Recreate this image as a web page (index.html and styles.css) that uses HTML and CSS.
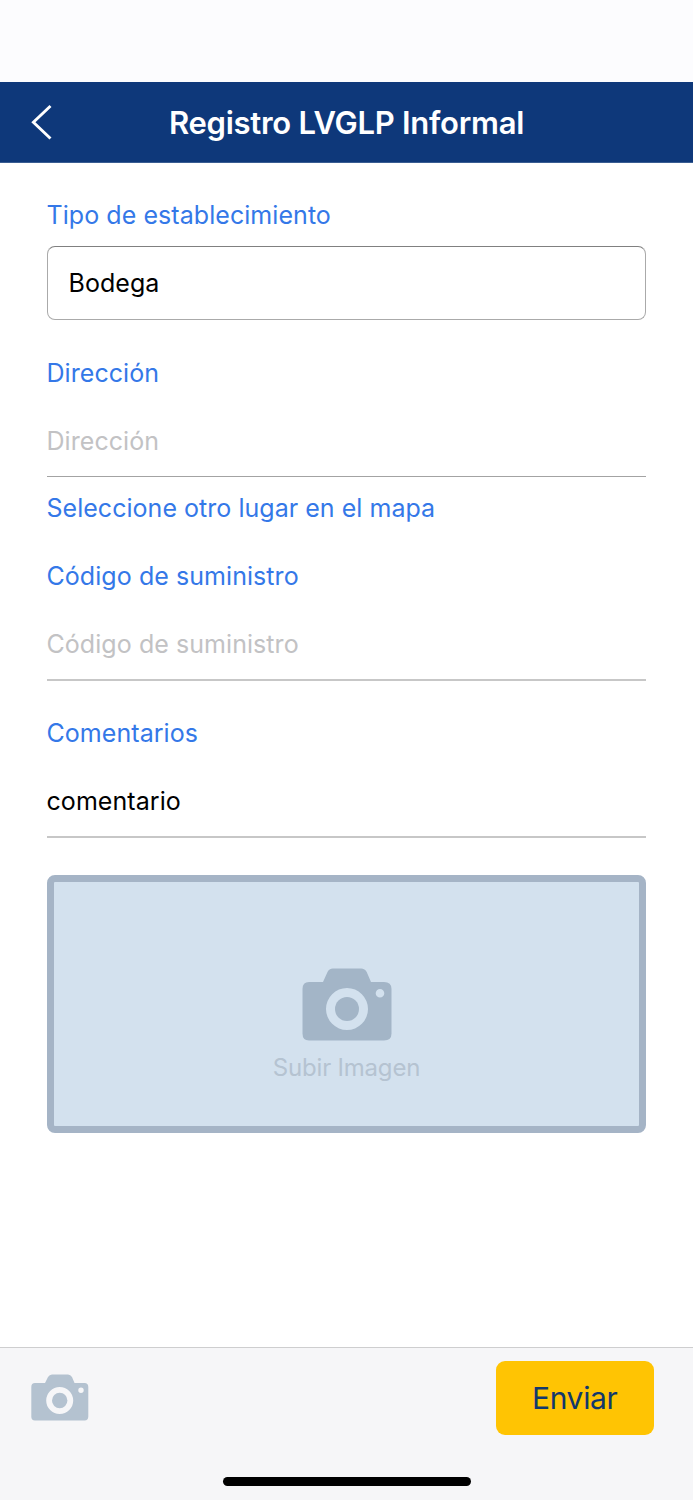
FILE: index.html
```html
<!DOCTYPE html>
<html lang="es">
<head>
<meta charset="utf-8">
<title>Registro LVGLP Informal</title>
<link rel="stylesheet" href="styles.css">
</head>
<body>
<div class="screen">
  <header class="navbar">
    <svg class="back" viewBox="0 0 24 38" fill="none" stroke="#fff" stroke-width="2.9"><path d="M20.500 3 3.400 19.200 20.500 35.500"/></svg>
    <h1 class="title">Registro LVGLP Informal</h1>
  </header>
  <main class="form">
    <div class="label"><span>Tipo de establecimiento</span></div>
    <div class="select"><span>Bodega</span></div>
    <div class="label"><span>Dirección</span></div>
    <div class="input placeholder"><span>Dirección</span></div>
    <a class="label map-link"><span>Seleccione otro lugar en el mapa</span></a>
    <div class="label"><span>Código de suministro</span></div>
    <div class="input placeholder code-input"><span>Código de suministro</span></div>
    <div class="label"><span>Comentarios</span></div>
    <div class="input comment-input"><span>comentario</span></div>
    <div class="upload">
      <svg class="camera-large" viewBox="0 0 90 73"><path fill="#a3b5c7" fill-rule="evenodd" d="M7 14H21L25.500 4Q27 .5 31 .5H59Q63 .5 64.700 4L69 14H82Q89.500 14 89.500 21V65.500Q89.500 72.500 82 72.500H7Q.5 72.500 .5 65.500V21Q.5 14 7 14ZM45 20A21 21 0 1 0 45 62A21 21 0 1 0 45 20ZM78 21A4.300 4.300 0 1 0 78 29.600A4.300 4.300 0 1 0 78 21Z"/><circle cx="45" cy="41" r="12" fill="#a3b5c7"/></svg>
      <span class="upload-text">Subir Imagen</span>
    </div>
  </main>
  <footer class="toolbar">
    <div class="actions">
      <svg class="camera-small" viewBox="0 0 58 47"><path fill="#b4c2d0" fill-rule="evenodd" d="M4 9H14L17 3Q18.500 .5 21 .5H37Q39.500 .5 41 3L43.500 9H53.500Q57.300 9 57.300 13V42.500Q57.300 46.500 53.500 46.500H4Q.3 46.500 .3 42.500V13Q.3 9 4 9ZM28.700 13A13.500 13.500 0 1 0 28.700 40A13.500 13.500 0 1 0 28.700 13ZM50 13.600A2.700 2.700 0 1 0 50 19A2.700 2.700 0 1 0 50 13.600Z"/><circle cx="28.700" cy="26.500" r="7.700" fill="#b4c2d0"/></svg>
      <button class="send">Enviar</button>
    </div>
    <div class="home-indicator"></div>
  </footer>
</div>
</body>
</html>
```
FILE: styles.css
```css
* { box-sizing: border-box; }
body { margin: 0; background: #fff; font-family: Inter, "Liberation Sans", sans-serif; }
.screen { width: 693px; height: 1500px; padding-top: 82px; display: flex; flex-direction: column; background: linear-gradient(#fcfcfe 82px, #fff 82px); }
.navbar { height: 81px; background: #0e387a; border-bottom: 1px solid #395d92; display: grid; grid-template-columns: 1fr auto 1fr; align-items: center; }
.back { width: 24px; height: 38px; margin-left: 30px; }
.title { margin: 0; padding-top: 1px; color: #fff; font-size: 31px; font-weight: 600; line-height: 38px; letter-spacing: -0.27px; white-space: nowrap; }
.form { flex: 1; padding: 36px 47px 0; display: flex; flex-direction: column; font-size: 25px; line-height: 32px; letter-spacing: 0.06px; white-space: nowrap; }
.label { color: #3478e8; flex: none; text-indent: -0.5px; }
.select { height: 74px; flex: none; margin: 15px 0 37px -0.5px; padding: 20px 21px; border: 1px solid #aaa; border-top-color: #808080; border-radius: 8px; color: #000; }
.input { height: 52px; flex: none; margin-top: 36px; border-bottom: 1px solid #a3a3a3; color: #000; text-indent: -0.5px; }
.placeholder { color: #c2c2c4; }
.map-link { margin: 15px 0 36px; letter-spacing: 0.03px; }
.code-input { height: 53px; margin-top: 36px; margin-bottom: 36px; border-bottom: 2px solid #c7c7c7; }
.comment-input { height: 53px; border-bottom: 2px solid #c7c7c7; }
.upload { height: 258px; flex: none; margin-top: 37px; border: 7px solid #a5b4c6; border-radius: 8px; background: #d3e1ee; display: flex; flex-direction: column; align-items: center; padding-top: 86px; }
.camera-large { width: 90px; height: 73px; }
.upload-text { color: #b5c3d1; margin-top: 11px; font-size: 24px; letter-spacing: -0.2px; }
.toolbar { height: 153px; background: #f6f6f8; border-top: 1px solid #cececf; display: flex; flex-direction: column; align-items: center; }
.actions { width: 100%; height: 87px; padding: 13px 39px 0 30.5px; display: flex; justify-content: space-between; align-items: flex-start; }
.camera-small { width: 58px; height: 47px; margin-top: 12.500px; }
.send { width: 158.5px; height: 74px; border: 0; border-radius: 9px; background: #ffc403; color: #12386c; font: 30px/38px Inter, "Liberation Sans", sans-serif; letter-spacing: -0.35px; padding: 0; }
.home-indicator { width: 248px; height: 9px; margin-top: 42px; border-radius: 5px; background: #000; }
```
